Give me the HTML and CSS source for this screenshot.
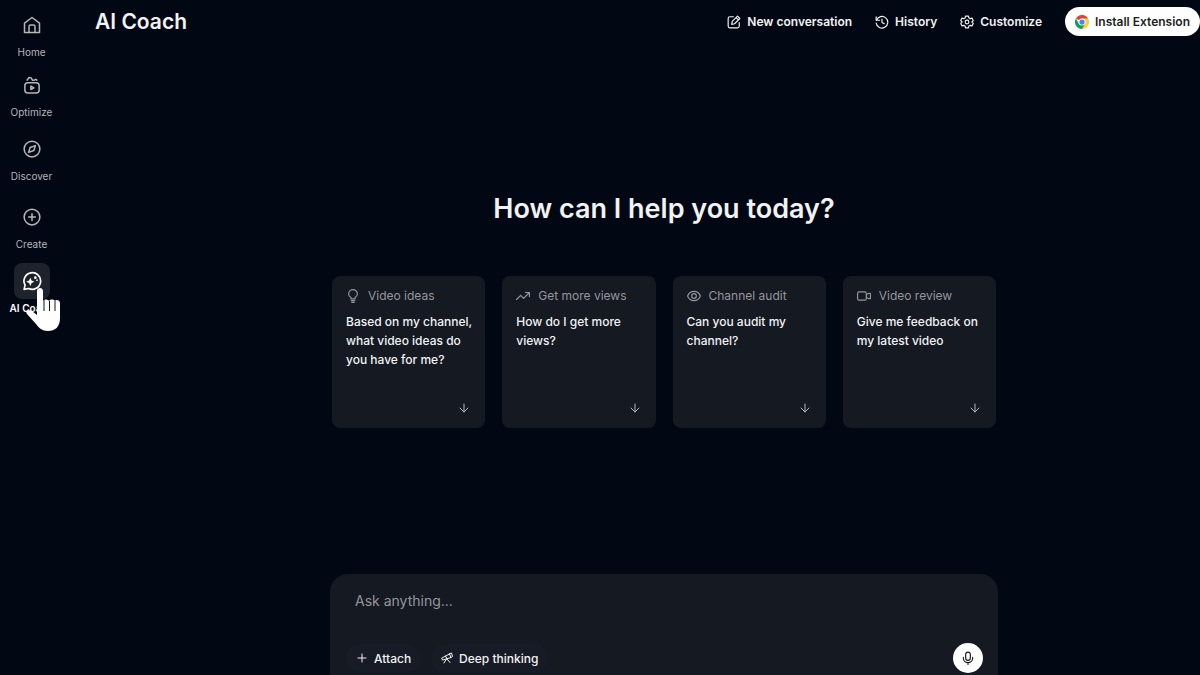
FILE: index.html
```html
<!DOCTYPE html>
<html lang="en">
<head>
    <meta charset="UTF-8">
    <meta name="viewport" content="width=device-width, initial-scale=1.0">
    <title>AI Coach</title>
    <link rel="stylesheet" href="styles.css">
</head>
<body>
    <div class="app">
        <!-- Sidebar -->
        <nav class="sidebar">
            <a href="#" class="nav-item">
                <span class="nav-icon">
                    <svg class="icon icon-lg" viewBox="0 0 24 24"><path d="M2 9.500 12 2l10 7.500V22H2z"/><path d="M8 22v-8a2 2 0 0 1 2-2h4a2 2 0 0 1 2 2v8"/></svg>
                </span>
                <span>Home</span>
            </a>
            <a href="#" class="nav-item">
                <span class="nav-icon">
                    <svg class="icon icon-lg" viewBox="0 0 24 24"><rect x="2.500" y="9" width="19" height="13.500" rx="4"/><path d="M10.500 13.500v4.500l4-2.200z"/><path d="M5.500 5.500 8 2l3 .5 1.500 3H15l2-1 1.500 1"/></svg>
                </span>
                <span>Optimize</span>
            </a>
            <a href="#" class="nav-item">
                <span class="nav-icon">
                    <svg class="icon icon-lg" viewBox="0 0 24 24"><circle cx="12" cy="12" r="10.500"/><path d="M16.500 7.500 14.500 14 7.500 16.500 9.500 10z"/></svg>
                </span>
                <span>Discover</span>
            </a>
            <a href="#" class="nav-item">
                <span class="nav-icon">
                    <svg class="icon icon-lg" viewBox="0 0 24 24"><circle cx="12" cy="12" r="10.500"/><path d="M12 7.500v9M7.500 12h9"/></svg>
                </span>
                <span>Create</span>
            </a>
            <a href="#" class="nav-item active">
                <span class="nav-icon">
                    <svg class="icon icon-lg" viewBox="0 0 24 24"><path d="M2.500 22l1.200-5A10 10 0 1 1 8 21z"/><path class="fill" d="m10 8 1.500 3.500L15 13l-3.500 1.500L10 18l-1.500-3.500L5 13l3.500-1.500z"/><circle class="fill" cx="16" cy="8" r="1.600"/><circle class="fill" cx="18" cy="11" r="1"/></svg>
                </span>
                <span>AI Coach</span>
                <svg class="cursor" viewBox="0 0 38 46"><path d="M13 5c0-4 6-4 6 0v10c1-2 5-2 6 0c1-2 5-2 6 0c1-2 5-1 5 2v15c0 9-5 13-12 13-6 0-9-3-12-7L3 28c-2-3 1-5 5-3l5 4z"/><path class="fingers" d="M20 14v11M25.500 15v10M31 15v10"/></svg>
            </a>
        </nav>

        <main class="main">
            <header class="header">
                <h1>AI Coach</h1>
                <div class="actions">
                    <button type="button" class="action">
                        <svg class="icon icon-md" viewBox="0 0 24 24"><path d="M11 3H5a3 3 0 0 0-3 3v13a3 3 0 0 0 3 3h13a3 3 0 0 0 3-3v-6"/><path d="m8 16 1-5 9-9 4 4-9 9zM15.500 4.500l4 4"/></svg>
                        New conversation
                    </button>
                    <button type="button" class="action">
                        <svg class="icon icon-md" viewBox="0 0 24 24"><path d="M2 3v6h6"/><path d="M2.500 9A10 10 0 1 1 2 14"/><path d="M12 7v6l4 2"/></svg>
                        History
                    </button>
                    <button type="button" class="action">
                        <svg class="icon icon-md" viewBox="0 0 24 24"><path d="m9.500 2-.7 3-2.300 1.300L3.500 5.400 1.300 9.500 3.600 12l-2.300 2.500 2.200 4.100 3-.9L8.800 19l.7 3h5l.7-3 2.300-1.300 3 .9 2.200-4.100-2.300-2.500 2.300-2.500-2.200-4.100-3 .9L15.200 5l-.7-3z"/><circle cx="12" cy="12" r="3.200"/></svg>
                        Customize
                    </button>
                    <button type="button" class="install">
                        <svg class="icon-md" viewBox="0 0 48 48"><path fill="#db4437" d="M24 24 3.200 12A24 24 0 0 1 44.800 12z"/><path fill="#ffcd40" d="M24 24V12h20.800A24 24 0 0 1 24 48z"/><path fill="#0f9d58" d="M24 24 13.600 30 3.200 12A24 24 0 0 0 24 48l10.400-18z"/><circle cx="24" cy="24" r="12" fill="#fff"/><circle cx="24" cy="24" r="9" fill="#4285f4"/></svg>
                        Install Extension
                    </button>
                </div>
            </header>

            <section class="content">
                <h2>How can I help you today?</h2>

                <!-- Suggestions -->
                <div class="cards">
                    <button type="button" class="card">
                        <span class="card-label">
                            <svg class="icon icon-md" viewBox="0 0 24 24"><path d="M8.500 17v-2.500C6 13 4.500 11 4.500 8.500a7.500 7.500 0 0 1 15 0c0 2.500-1.500 4.500-4 6V17zM9 20h6M10 23h4"/></svg>
                            Video ideas
                        </span>
                        <span class="card-text">Based on my channel, what video ideas do you have for me?</span>
                        <svg class="icon card-arrow" viewBox="0 0 10 10"><path d="M5 1v8M1 5l4 4 4-4"/></svg>
                    </button>
                    <button type="button" class="card">
                        <span class="card-label">
                            <svg class="icon icon-md" viewBox="0 0 24 24"><path d="m1 18 7-7 5 5L23 6M16 6h7v7"/></svg>
                            Get more views
                        </span>
                        <span class="card-text">How do I get more views?</span>
                        <svg class="icon card-arrow" viewBox="0 0 10 10"><path d="M5 1v8M1 5l4 4 4-4"/></svg>
                    </button>
                    <button type="button" class="card">
                        <span class="card-label">
                            <svg class="icon icon-md" viewBox="0 0 24 24"><path d="M1 12c2-5 6-8 11-8s9 3 11 8c-2 5-6 8-11 8s-9-3-11-8z"/><circle cx="12" cy="12" r="4"/></svg>
                            Channel audit
                        </span>
                        <span class="card-text">Can you audit my channel?</span>
                        <svg class="icon card-arrow" viewBox="0 0 10 10"><path d="M5 1v8M1 5l4 4 4-4"/></svg>
                    </button>
                    <button type="button" class="card">
                        <span class="card-label">
                            <svg class="icon icon-md" viewBox="0 0 24 24"><rect x="1" y="5" width="15" height="14" rx="2.500"/><path d="m16 10 4-2.500h3v9h-3L16 14"/></svg>
                            Video review
                        </span>
                        <span class="card-text">Give me feedback on my latest video</span>
                        <svg class="icon card-arrow" viewBox="0 0 10 10"><path d="M5 1v8M1 5l4 4 4-4"/></svg>
                    </button>
                </div>
            </section>

            <!-- Message box -->
            <div class="composer-wrap">
                <form class="composer">
                    <input type="text" placeholder="Ask anything..." aria-label="Ask anything">
                    <div class="tools">
                        <button type="button" class="tool">
                            <svg class="icon icon-sm" viewBox="0 0 24 24"><path d="M12 4v16M4 12h16"/></svg>
                            Attach
                        </button>
                        <button type="button" class="tool">
                            <svg class="icon icon-sm" viewBox="0 0 24 24"><path d="m2 12 15-8 3 7-16 5zM9 8l3 6M16 4l5-2 2 7-3 2M11 14l-5 8M12 14l6 7"/></svg>
                            Deep thinking
                        </button>
                        <button type="button" class="mic" aria-label="Voice input">
                            <svg class="icon icon-md" viewBox="0 0 24 24"><rect x="8" y="2" width="8" height="14" rx="4"/><path d="M4 11v1a8 8 0 0 0 16 0v-1M12 20v3"/></svg>
                        </button>
                    </div>
                </form>
            </div>
        </main>
    </div>
</body>
</html>
```
FILE: styles.css
```css
* {
    box-sizing: border-box;
}

body {
    margin: 0;
    background-color: #020813;
    color: #f1f2f4;
    font-family: Inter, "Liberation Sans", sans-serif;
    font-size: 12px;
}

button {
    padding: 0;
    border: none;
    background: none;
    color: inherit;
    font: inherit;
    cursor: pointer;
}

.app {
    display: flex;
    min-height: 100vh;
}

.icon {
    flex: none;
    fill: none;
    stroke: currentColor;
    stroke-width: 2;
    stroke-linecap: round;
    stroke-linejoin: round;
}

.icon .fill {
    fill: currentColor;
    stroke: none;
}

.icon-lg {
    width: 18px;
    height: 18px;
}

.icon-md {
    width: 14px;
    height: 14px;
}

.icon-sm {
    width: 12px;
    height: 12px;
}

/* Sidebar */
.sidebar {
    display: grid;
    grid-template-rows: 60px 64px 68px 64px 64px;
    flex: none;
    align-content: start;
    width: 63px;
    padding-top: 7px;
}

.nav-item {
    position: relative;
    display: flex;
    flex-direction: column;
    align-items: center;
    color: #b4b6ba;
    font-size: 10px;
    line-height: 18px;
    text-decoration: none;
    white-space: nowrap;
}

.nav-icon {
    display: flex;
    align-items: center;
    justify-content: center;
    width: 36px;
    height: 36px;
    border-radius: 8px;
}

.active {
    color: #fff;
    font-weight: 600;
}

.active .nav-icon {
    background-color: #1e222b;
}

.active .icon-lg {
    width: 20px;
    height: 20px;
}

.cursor {
    position: absolute;
    top: 23px;
    left: 24px;
    width: 38px;
    height: 46px;
    fill: #fff;
}

.fingers {
    fill: none;
    stroke: #10141d;
    stroke-width: 1;
}

/* Header */
.main {
    display: flex;
    flex: 1;
    flex-direction: column;
}

.header {
    display: flex;
    align-items: center;
    justify-content: space-between;
    padding: 7px 0 7px 32px;
}

h1 {
    margin: 0;
    font-size: 21px;
    font-weight: 600;
    line-height: 28px;
}

.actions {
    display: flex;
    align-items: center;
    gap: 23px;
    font-weight: 600;
}

.action,
.install {
    display: flex;
    align-items: center;
    gap: 6px;
}

.install {
    height: 29px;
    padding: 0 10px;
    border-radius: 15px;
    background-color: #fff;
    color: #1c1d20;
}

/* Content */
.content {
    flex: 1;
    padding: 148px 0 32px 65px;
}

h2 {
    margin: 0 0 49px;
    font-size: 27px;
    font-weight: 600;
    line-height: 36px;
    text-align: center;
}

.cards {
    display: grid;
    grid-template-columns: repeat(4, 1fr);
    gap: 17px;
    max-width: 664px;
    margin: 0 auto;
}

.card {
    display: flex;
    flex-direction: column;
    min-height: 152px;
    padding: 12px 8px 15px 14px;
    border-radius: 8px;
    background-color: #141922;
    text-align: left;
}

.card-label {
    display: flex;
    align-items: center;
    gap: 8px;
    margin-bottom: 8px;
    color: #94969c;
    line-height: 16px;
}

.card-text {
    font-weight: 500;
    line-height: 19px;
}

.card-arrow {
    align-self: flex-end;
    width: 10px;
    height: 10px;
    margin-top: auto;
    margin-right: 8px;
    color: #b4b6ba;
    stroke-width: 1;
}

/* Message box */
.composer-wrap {
    padding-left: 65px;
}

.composer {
    max-width: 668px;
    margin: 0 auto;
    padding: 15px 15px 2px 16px;
    border-radius: 18px 18px 0 0;
    background-color: #141922;
}

.composer input {
    display: block;
    width: 100%;
    height: 22px;
    margin-bottom: 32px;
    padding: 0 9px;
    border: none;
    outline: none;
    background: none;
    color: inherit;
    font: inherit;
    font-size: 14px;
}

.composer input::placeholder {
    color: #94969c;
}

.tools {
    display: flex;
    align-items: center;
    gap: 10px;
}

.tool {
    display: flex;
    align-items: center;
    gap: 6px;
    height: 28px;
    padding: 0 10px;
    border-radius: 14px;
    background-color: #171b25;
    font-weight: 500;
}

.mic {
    display: flex;
    align-items: center;
    justify-content: center;
    width: 30px;
    height: 30px;
    margin-left: auto;
    border-radius: 50%;
    background-color: #fff;
    color: #1c1d20;
}
```
